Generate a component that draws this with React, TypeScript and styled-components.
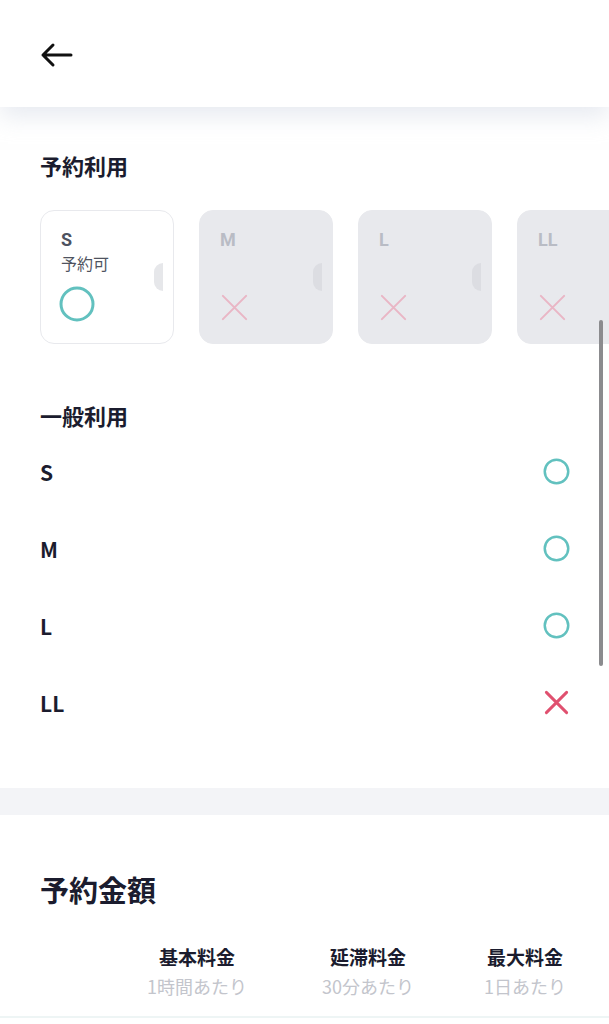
import React from 'react'
import styled, { createGlobalStyle } from 'styled-components'

const GlobalStyle = createGlobalStyle`
  html, body {
    margin: 0;
    padding: 0;
    overflow: hidden;
    background: #ffffff;
  }
  body {
    font-family: 'Noto Sans CJK JP', 'Noto Sans', sans-serif;
    color: #1b1c2e;
  }
`

const Page = styled.div`
  position: relative;
  width: 609px;
  height: 1024px;
  overflow: hidden;
  background: #ffffff;
`
const Header = styled.header`
  position: relative;
  z-index: 1;
  height: 107px;
  display: flex;
  align-items: center;
  padding: 0 40px;
  background: #ffffff;
  box-shadow: 0 10px 22px rgba(214, 218, 230, 0.55);
`
const BackButton = styled.button`
  display: flex;
  align-items: center;
  padding: 0;
  margin-top: 2px;
  border: none;
  background: none;
  cursor: pointer;
`
const Section = styled.section`
  padding: 0 40px;
`
const SectionTitle = styled.h2<{ $big?: boolean }>`
  margin: 0;
  font-size: ${p => (p.$big ? '29px' : '22px')};
  line-height: ${p => (p.$big ? '38px' : '30px')};
  font-weight: 700;
  color: #1b1c2e;
`
const ReserveBlock = styled(Section)`
  padding-top: 43px;
`
const CardRow = styled.div`
  display: flex;
  gap: 25px;
  margin-top: 30px;
  margin-right: -40px;
`
const Card = styled.div<{ $active: boolean }>`
  position: relative;
  flex: 0 0 134px;
  height: 134px;
  box-sizing: border-box;
  border-radius: 14px;
  padding: 18px 20px 0;
  background: ${p => (p.$active ? '#ffffff' : '#e8e9ed')};
  border: 1px solid #e8e9ed;
  display: flex;
  flex-direction: column;
`
const CardSize = styled.div<{ $active: boolean }>`
  font-family: Roboto, 'Liberation Sans', sans-serif;
  font-size: 18px;
  line-height: 22px;
  font-weight: 700;
  color: ${p => (p.$active ? '#4d5260' : '#b9bcc5')};
`
const CardNote = styled.div`
  font-size: 16px;
  line-height: 24px;
  color: #4f5360;
  height: 24px;
`
const CardMark = styled.div<{ $active: boolean }>`
  margin-top: ${p => (p.$active ? '11px' : '17px')};
  margin-left: ${p => (p.$active ? '-2px' : '-1px')};
  display: flex;
`
const Notch = styled.div<{ $active: boolean }>`
  position: absolute;
  right: 10px;
  top: 52px;
  width: 9px;
  height: 28px;
  border-radius: 9px 0 0 9px;
  background: ${p => (p.$active ? '#e6e7ea' : '#dcdde2')};
`
const UsageBlock = styled(Section)`
  padding-top: 56px;
  padding-right: 39px;
  padding-bottom: 47px;
`
const UsageList = styled.div`
  margin-top: 3px;
  display: flex;
  flex-direction: column;
`
const UsageRow = styled.div`
  height: 77px;
  display: flex;
  align-items: center;
  justify-content: space-between;
`
const UsageSize = styled.span`
  font-size: 21px;
  font-weight: 700;
  color: #1b1c2e;
`
const Divider = styled.div`
  height: 27px;
  background: #f3f4f7;
`
const PriceBlock = styled(Section)`
  padding-top: 55px;
`
const PriceHead = styled.div`
  display: grid;
  grid-template-columns: 79px 156px 186px 128px;
  margin-top: 35px;
`
const PriceCol = styled.div`
  display: flex;
  flex-direction: column;
  align-items: center;
`
const PriceLabel = styled.div`
  font-size: 19px;
  line-height: 28px;
  font-weight: 700;
  color: #1b1c2e;
`
const PriceUnit = styled.div`
  font-size: 18px;
  line-height: 30px;
  color: #c3c5cc;
`
const TableEdge = styled.div`
  margin: 15px -40px 0;
  height: 8px;
  border-top: 2px solid #eef5f5;
`
const ScrollThumb = styled.div`
  position: absolute;
  left: 599px;
  top: 320px;
  width: 4px;
  height: 346px;
  border-radius: 2px;
  background: #8b8b8e;
`

const ArrowLeft = () => (
  <svg width="34" height="26" viewBox="0 0 34 26" fill="none">
    <path
      d="M31 13 H3 M13 3 L3 13 L13 23"
      stroke="#111"
      strokeWidth="3"
      strokeLinecap="round"
      strokeLinejoin="round"
    />
  </svg>
)

const OkMark = ({ size, stroke }: { size: number; stroke: number }) => (
  <svg width={size} height={size} viewBox={`0 0 ${size} ${size}`}>
    <circle
      cx={size / 2}
      cy={size / 2}
      r={size / 2 - stroke / 2 - 0.5}
      fill="none"
      stroke="#62c1bf"
      strokeWidth={stroke}
    />
  </svg>
)

const NgMark = ({ size, stroke, faded }: { size: number; stroke: number; faded?: boolean }) => (
  <svg width={size} height={size} viewBox="0 0 24 24">
    <path
      d="M3 3 L21 21 M21 3 L3 21"
      stroke={faded ? '#e9b6c5' : '#e0506f'}
      strokeWidth={stroke}
      strokeLinecap="round"
    />
  </svg>
)

const reserveCards = [
  { size: 'S', ok: true },
  { size: 'M', ok: false },
  { size: 'L', ok: false },
  { size: 'LL', ok: false },
]

const usage = [
  { size: 'S', ok: true },
  { size: 'M', ok: true },
  { size: 'L', ok: true },
  { size: 'LL', ok: false },
]

const prices = [
  { label: '基本料金', unit: '1時間あたり' },
  { label: '延滞料金', unit: '30分あたり' },
  { label: '最大料金', unit: '1日あたり' },
]

const App = () => {
  return (
    <Page>
      <GlobalStyle />
      <Header>
        <BackButton aria-label="戻る">
          <ArrowLeft />
        </BackButton>
      </Header>

      <ReserveBlock>
        <SectionTitle>予約利用</SectionTitle>
        <CardRow>
          {reserveCards.map(c => (
            <Card key={c.size} $active={c.ok}>
              <CardSize $active={c.ok}>{c.size}</CardSize>
              <CardNote>{c.ok ? '予約可' : ''}</CardNote>
              <CardMark $active={c.ok}>
                {c.ok ? <OkMark size={36} stroke={3} /> : <NgMark size={31} stroke={1.6} faded />}
              </CardMark>
              <Notch $active={c.ok} />
            </Card>
          ))}
        </CardRow>
      </ReserveBlock>

      <UsageBlock>
        <SectionTitle>一般利用</SectionTitle>
        <UsageList>
          {usage.map(u => (
            <UsageRow key={u.size}>
              <UsageSize>{u.size}</UsageSize>
              {u.ok ? <OkMark size={27} stroke={2.5} /> : <NgMark size={27} stroke={2.6} />}
            </UsageRow>
          ))}
        </UsageList>
      </UsageBlock>

      <Divider />

      <PriceBlock>
        <SectionTitle $big>予約金額</SectionTitle>
        <PriceHead>
          <div />
          {prices.map(p => (
            <PriceCol key={p.label}>
              <PriceLabel>{p.label}</PriceLabel>
              <PriceUnit>{p.unit}</PriceUnit>
            </PriceCol>
          ))}
        </PriceHead>
        <TableEdge />
      </PriceBlock>

      <ScrollThumb />
    </Page>
  )
}

export default App
